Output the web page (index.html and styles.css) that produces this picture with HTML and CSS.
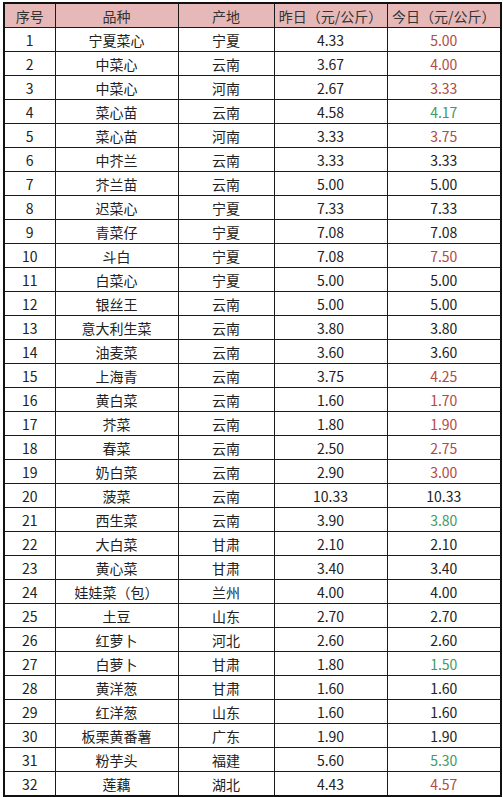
FILE: index.html
```html
<!DOCTYPE html>
<html lang="zh">
<head>
<meta charset="utf-8">
<link rel="stylesheet" href="styles.css">
</head>
<body>
<table class="price">
<colgroup><col class="c1"><col class="c2"><col class="c3"><col class="c4"><col class="c5"></colgroup>
<thead>
<tr><th>序号</th><th>品种</th><th>产地</th><th>昨日（元/公斤）</th><th>今日（元/公斤）</th></tr>
</thead>
<tbody>
<tr><td>1</td><td>宁夏菜心</td><td>宁夏</td><td>4.33</td><td class="up">5.00</td></tr>
<tr><td>2</td><td>中菜心</td><td>云南</td><td>3.67</td><td class="up">4.00</td></tr>
<tr><td>3</td><td>中菜心</td><td>河南</td><td>2.67</td><td class="up">3.33</td></tr>
<tr><td>4</td><td>菜心苗</td><td>云南</td><td>4.58</td><td class="down">4.17</td></tr>
<tr><td>5</td><td>菜心苗</td><td>河南</td><td>3.33</td><td class="up">3.75</td></tr>
<tr><td>6</td><td>中芥兰</td><td>云南</td><td>3.33</td><td>3.33</td></tr>
<tr><td>7</td><td>芥兰苗</td><td>云南</td><td>5.00</td><td>5.00</td></tr>
<tr><td>8</td><td>迟菜心</td><td>宁夏</td><td>7.33</td><td>7.33</td></tr>
<tr><td>9</td><td>青菜仔</td><td>宁夏</td><td>7.08</td><td>7.08</td></tr>
<tr><td>10</td><td>斗白</td><td>宁夏</td><td>7.08</td><td class="up">7.50</td></tr>
<tr><td>11</td><td>白菜心</td><td>宁夏</td><td>5.00</td><td>5.00</td></tr>
<tr><td>12</td><td>银丝王</td><td>云南</td><td>5.00</td><td>5.00</td></tr>
<tr><td>13</td><td>意大利生菜</td><td>云南</td><td>3.80</td><td>3.80</td></tr>
<tr><td>14</td><td>油麦菜</td><td>云南</td><td>3.60</td><td>3.60</td></tr>
<tr><td>15</td><td>上海青</td><td>云南</td><td>3.75</td><td class="up">4.25</td></tr>
<tr><td>16</td><td>黄白菜</td><td>云南</td><td>1.60</td><td class="up">1.70</td></tr>
<tr><td>17</td><td>芥菜</td><td>云南</td><td>1.80</td><td class="up">1.90</td></tr>
<tr><td>18</td><td>春菜</td><td>云南</td><td>2.50</td><td class="up">2.75</td></tr>
<tr><td>19</td><td>奶白菜</td><td>云南</td><td>2.90</td><td class="up">3.00</td></tr>
<tr><td>20</td><td>菠菜</td><td>云南</td><td>10.33</td><td>10.33</td></tr>
<tr><td>21</td><td>西生菜</td><td>云南</td><td>3.90</td><td class="down">3.80</td></tr>
<tr><td>22</td><td>大白菜</td><td>甘肃</td><td>2.10</td><td>2.10</td></tr>
<tr><td>23</td><td>黄心菜</td><td>甘肃</td><td>3.40</td><td>3.40</td></tr>
<tr><td>24</td><td>娃娃菜（包）</td><td>兰州</td><td>4.00</td><td>4.00</td></tr>
<tr><td>25</td><td>土豆</td><td>山东</td><td>2.70</td><td>2.70</td></tr>
<tr><td>26</td><td>红萝卜</td><td>河北</td><td>2.60</td><td>2.60</td></tr>
<tr><td>27</td><td>白萝卜</td><td>甘肃</td><td>1.80</td><td class="down">1.50</td></tr>
<tr><td>28</td><td>黄洋葱</td><td>甘肃</td><td>1.60</td><td>1.60</td></tr>
<tr><td>29</td><td>红洋葱</td><td>山东</td><td>1.60</td><td>1.60</td></tr>
<tr><td>30</td><td>板栗黄番薯</td><td>广东</td><td>1.90</td><td>1.90</td></tr>
<tr><td>31</td><td>粉芋头</td><td>福建</td><td>5.60</td><td class="down">5.30</td></tr>
<tr><td>32</td><td>莲藕</td><td>湖北</td><td>4.43</td><td class="up">4.57</td></tr>
</tbody>
</table>
</body>
</html>
```
FILE: styles.css
```css
html, body {
  margin: 0;
  padding: 0;
  background: #ffffff;
}
body {
  padding: 2px 0 0 3px;
  font-family: "Noto Sans CJK SC", "Noto Sans", sans-serif;
  color: #222222;
}
.price {
  border-collapse: collapse;
  table-layout: fixed;
  width: 497px;
  border: 2px solid #111111;
  font-size: 14px;
}
.c1 { width: 51px; }
.c2 { width: 123px; }
.c3 { width: 96px; }
.c4 { width: 113px; }
.c5 { width: 114px; }
.price th,
.price td {
  border: 1px solid #1a1a1a;
  height: 23px;
  padding: 0;
  text-align: center;
  vertical-align: middle;
  font-weight: normal;
  line-height: 20px;
  white-space: nowrap;
}
.price th {
  background: #e6b9b8;
  color: #333333;
}
.price td.up { color: #b5493f; }
.price td.down { color: #3f9a64; }
```
